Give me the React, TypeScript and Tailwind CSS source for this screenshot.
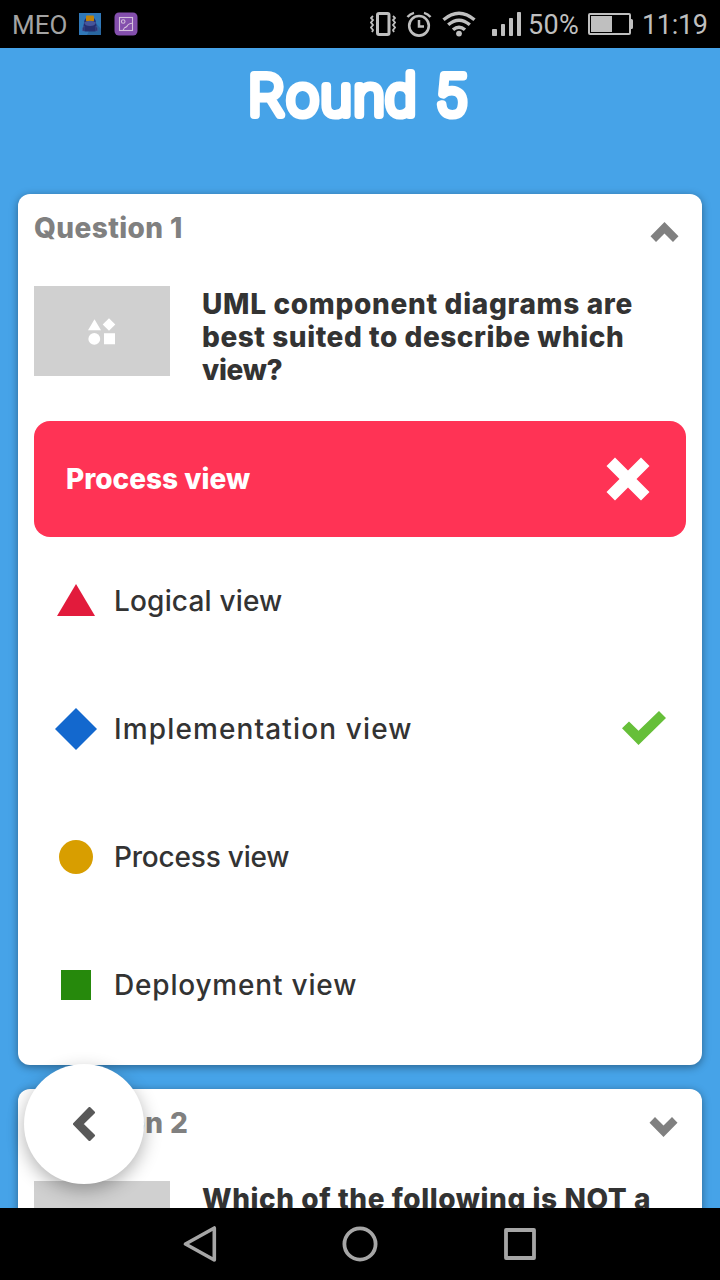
import React from "react";

function StatusBar() {
  return (
    <header className="flex h-12 shrink-0 items-center bg-black pl-3 font-['Roboto',sans-serif] text-[26px] text-[#bfbfbf]">
      <span className="w-[67px] pt-0.5 text-[26px] whitespace-nowrap text-[#a3a3a3]">MEO</span>
      <svg className="h-[22px] w-[22px]" viewBox="0 0 22 22">
        <rect width="22" height="22" fill="#3078b8" />
        <path d="M15 8l7 8v6H8z" fill="#28669f" />
        <path d="M5 10Q5 4 11 4t6 6l1 5.5q0 3-2.5 3h-9q-2.5 0-2.5-3z" fill="#252f70" />
        <rect x="7" y="2.5" width="8" height="6" rx="1" fill="#c28308" />
        <path d="M5 9.5q6-3.5 12 0-1 3.5-6 3.5T5 9.5z" fill="#46559a" />
        <path d="M5 13q-2 1.5-1.5 5H5zM17 13q2 1.5 1.5 5H17z" fill="#202761" stroke="#4858a0" strokeWidth=".6" />
      </svg>
      <svg className="ml-[13px] h-6 w-6" viewBox="0 0 24 24" fill="none">
        <rect x=".5" y=".5" width="23" height="23" rx="4.5" fill="#844fad" />
        <g stroke="#d3bfdc" strokeWidth="1.1">
          <rect x="5.5" y="5.5" width="13" height="13" />
          <circle cx="9.2" cy="9.5" r="1.8" />
          <path d="M9 18.5q1-3.3 4-4.2 1.2-2.9 5.5-3M13 14.3l-1.5 1.2" />
        </g>
      </svg>
      <svg className="ml-[232px] h-6 w-[26px]" viewBox="0 0 26 24" fill="none" stroke="#bfbfbf">
        <rect x="7.5" y="1.5" width="11.5" height="21" rx="1.5" strokeWidth="3" />
        <path d="M3 4L1 6l2 2-2 2.5L3 13l-2 2.5L3 18l-1 2M23 4l2 2-2 2 2 2.5-2 2.5 2 2.5-2 2.5 1 2" strokeWidth="1.8" />
      </svg>
      <svg className="ml-[10px] h-[26px] w-[26px]" viewBox="0 0 26 26" fill="none" stroke="#bfbfbf">
        <circle cx="13" cy="14.8" r="9.8" strokeWidth="2.6" />
        <path d="M13 9v6.5h5" strokeWidth="2.5" />
        <path d="M1.5 6Q4 2.8 8 1.8M24.5 6Q22 2.8 18 1.8" strokeWidth="2.4" />
      </svg>
      <svg className="ml-[10px] h-[26px] w-[34px]" viewBox="0 0 34 26" fill="none" stroke="#bfbfbf" strokeWidth="3.4">
        <path d="M1.5 8.8q15.5-13 31 0M6.2 13.8q10.8-9.3 21.6 0M11 18.8q6-5.3 12 0" />
        <circle cx="17" cy="22.6" r="2.9" fill="#bfbfbf" stroke="none" />
      </svg>
      <svg className="ml-4 h-6 w-[29px]" viewBox="0 0 29 24" fill="#bfbfbf">
        <rect y="17" width="5" height="7" rx=".8" />
        <rect x="9" y="12" width="4" height="12" rx=".8" />
        <rect x="17" y="6" width="4" height="18" rx=".8" />
        <rect x="25" width="4" height="24" rx=".8" />
      </svg>
      <span className="ml-[7px] w-[60px] pt-0.5 text-[27px] tracking-[0.3px] whitespace-nowrap">50%</span>
      <svg className="h-[22px] w-[45px]" viewBox="0 0 45 22">
        <rect x="1" y="1" width="41" height="20" rx="1" fill="none" stroke="#bfbfbf" strokeWidth="2" />
        <path d="M3 3h21v16H3zM42 6h1.5q1.5 0 1.5 1.5v7q0 1.5-1.5 1.5H42z" fill="#bfbfbf" />
      </svg>
      <span className="ml-[9px] pt-0.5 text-[27px] tracking-[-0.3px] whitespace-nowrap">11:19</span>
    </header>
  );
}

const colors = { red: "#e21b3c", blue: "#1368ce", yellow: "#d89e00", green: "#26890c" };

function AnswerShape({ kind }: { kind: keyof typeof colors }) {
  return (
    <svg className="h-[42px] w-[42px] shrink-0" viewBox="0 0 42 42" fill={colors[kind]}>
      {kind === "red" && <path d="M21 4l19 32H2z" />}
      {kind === "blue" && <path d="M21 0l21 21-21 21L0 21z" />}
      {kind === "yellow" && <circle cx="21" cy="21" r="17" />}
      {kind === "green" && <path d="M6 6h30v30H6z" />}
    </svg>
  );
}

const answers: { kind: keyof typeof colors; text: string; spacing: string; correct?: boolean }[] = [
  { kind: "red", text: "Logical view", spacing: "tracking-[0.18px]" },
  { kind: "blue", text: "Implementation view", spacing: "tracking-[1.13px]", correct: true },
  { kind: "yellow", text: "Process view", spacing: "tracking-[-0.2px]" },
  { kind: "green", text: "Deployment view", spacing: "tracking-[0.81px]" },
];

function Thumbnail() {
  return (
    <div className="flex h-[90px] w-[136px] shrink-0 items-center justify-center bg-[#d0d0d0]">
      <svg className="h-[27px] w-[28px]" viewBox="0 0 28 27" fill="white">
        <path d="M6.5 1.2L13 12.2H0zM21 .3l6.3 6.2-6.3 6.2-6.3-6.2zM16 15.3h11v11H16z" />
        <circle cx="6.3" cy="20.9" r="5.9" />
      </svg>
    </div>
  );
}

function CardHeader({ title, open }: { title: string; open: boolean }) {
  return (
    <div className="flex h-[92px] items-start justify-between">
      <h2 className="pt-[17px] text-[28px] leading-[34px] font-extrabold tracking-[0.4px] text-[#808080]">{title}</h2>
      <svg className={open ? "mt-7 mr-[7px] h-5 w-[29px]" : "mt-7 mr-2 h-5 w-[29px]"} viewBox="-.5 0 29 20" fill="#808080">
        {open ? <path d="M14 0l14 14.3-5.5 5.7-8.5-8.5L5.5 20 0 14.3z" /> : <path d="M14 20L0 5.8 5.5 0 14 8.5 22.5 0 28 5.8z" />}
      </svg>
    </div>
  );
}

export default function App() {
  return (
    <div className="relative flex h-[1280px] w-[720px] flex-col overflow-hidden bg-[#46a3e8] font-['Inter',sans-serif] text-[#333]">
      <StatusBar />
      <main className="flex h-[1160px] flex-col overflow-hidden px-[18px]">
        <h1 className="h-[146px] shrink-0">
          <svg className="h-[90px] w-full" viewBox="0 0 684 90">
            <text x="231 269.5 303 336 367.5 400 418" y="67.2" fill="white" stroke="white" strokeWidth="8.2" strokeLinejoin="round" className="font-['Roboto',sans-serif] text-[55px] font-thin">Round 5</text>
          </svg>
        </h1>
        <section className="h-[871px] shrink-0 rounded-xl bg-white px-4 shadow-[0_2px_8px_rgba(0,0,0,0.4)]">
          <CardHeader title="Question 1" open />
          <div className="flex h-[135px] items-start gap-8">
            <Thumbnail />
            <p className="pt-0.5 text-[28px] leading-[33px] font-extrabold whitespace-nowrap">
              <span className="block tracking-[0.68px]">UML component diagrams are</span>
              <span className="block tracking-[0.54px]">best suited to describe which</span>
              <span className="block tracking-[-0.3px]">view?</span>
            </p>
          </div>
          <div className="flex h-[116px] items-center justify-between rounded-2xl bg-[#ff3355] pr-9 pl-8 text-white">
            <span className="text-[28px] leading-[34px] font-extrabold whitespace-nowrap">Process view</span>
            <svg className="h-11 w-11" viewBox="0 0 44 44" fill="white">
              <path d="M9 .5l13 13 13-13L43.5 9l-13 13 13 13-8.5 8.5-13-13-13 13L.5 35l13-13L.5 9z" />
            </svg>
          </div>
          <ul>
            {answers.map((a) => (
              <li key={a.kind} className="flex h-32 items-center pr-5 pl-[21px]">
                <AnswerShape kind={a.kind} />
                <span className={`ml-[17px] flex-1 text-[28px] leading-[34px] font-[450] whitespace-nowrap ${a.spacing}`}>{a.text}</span>
                {a.correct && (
                  <svg className="mb-0.5 h-[34px] w-11" viewBox="0 0 44 34" fill="#66bf39">
                    <path d="M0 17.3l7-6.8 9.5 9.3L37 0l7 7-27.5 27z" />
                  </svg>
                )}
              </li>
            ))}
          </ul>
        </section>
        <section className="mt-6 h-[871px] shrink-0 rounded-xl bg-white px-4 shadow-[0_2px_8px_rgba(0,0,0,0.4)]">
          <CardHeader title="Question 2" open={false} />
          <div className="flex items-start gap-8">
            <Thumbnail />
            <p className="pt-0.5 text-[28px] leading-[33px] font-extrabold tracking-[0.57px] whitespace-nowrap">Which of the following is NOT a</p>
          </div>
        </section>
      </main>
      <nav className="flex h-[72px] shrink-0 items-center justify-center gap-[124px] bg-black">
        {["back", "home", "recent"].map((name) => (
          <svg key={name} className="h-9 w-9" viewBox="0 0 36 36" fill="none" stroke="#a6a6a6" strokeWidth="3.8" strokeLinejoin="round">
            {name === "back" && <path d="M3.5 18L32.3 2v32z" strokeWidth="3.6" />}
            {name === "home" && <circle cx="18" cy="18" r="15.6" />}
            {name === "recent" && <rect x="4" y="4" width="28" height="28" />}
          </svg>
        ))}
      </nav>
      <button aria-label="Back" className="absolute top-[1064px] left-6 flex h-[120px] w-[120px] items-center justify-center rounded-full bg-white shadow-[0_6px_18px_rgba(0,0,0,0.3)]">
        <svg className="h-[35px] w-[23px]" viewBox="0.5 0.5 23 35" fill="#595959" stroke="#595959" strokeWidth="3" strokeLinejoin="round">
          <path d="M17 2l4 4L9.3 17.5 21 29l-4 4L2 17.5z" />
        </svg>
      </button>
    </div>
  );
}
